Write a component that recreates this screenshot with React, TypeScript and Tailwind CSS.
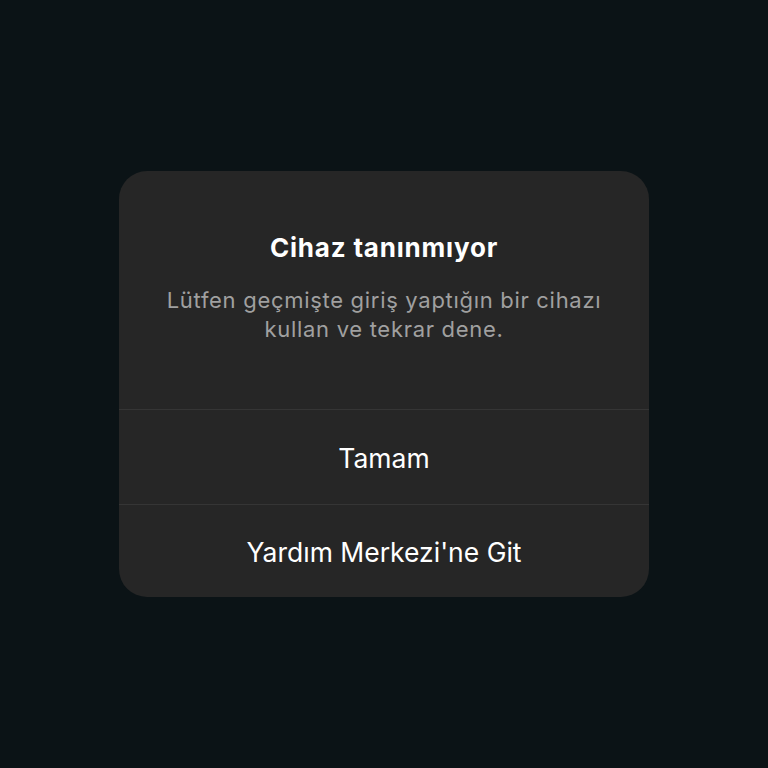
import React from "react";

const actions = [
  { label: "Tamam", height: "h-[95px]" },
  { label: "Yardım Merkezi'ne Git", height: "h-[93px]" },
];

export default function App() {
  return (
    <div
      className="min-h-screen w-full flex items-center justify-center bg-[#0b1316]"
      style={{ fontFamily: "Inter, 'Noto Sans', sans-serif" }}
    >
      <div className="w-[530px] rounded-[28px] bg-[#262626] overflow-hidden">
        <div className="px-10 pt-[62px] pb-[65px] text-center">
          <h2 className="text-[26px] leading-[30px] font-bold tracking-[0.8px] text-white">
            Cihaz tanınmıyor
          </h2>
          <p className="mt-[23px] text-[22px] leading-[29px] tracking-[0.7px] text-[#a0a0a0]">
            Lütfen geçmişte giriş yaptığın bir cihazı
            <br />
            kullan ve tekrar dene.
          </p>
        </div>
        {actions.map(({ label, height }) => (
          <button
            key={label}
            className={`w-full ${height} pt-[3px] flex items-center justify-center border-t border-[#353535] text-[26.5px] text-white`}
          >
            {label}
          </button>
        ))}
      </div>
    </div>
  );
}
